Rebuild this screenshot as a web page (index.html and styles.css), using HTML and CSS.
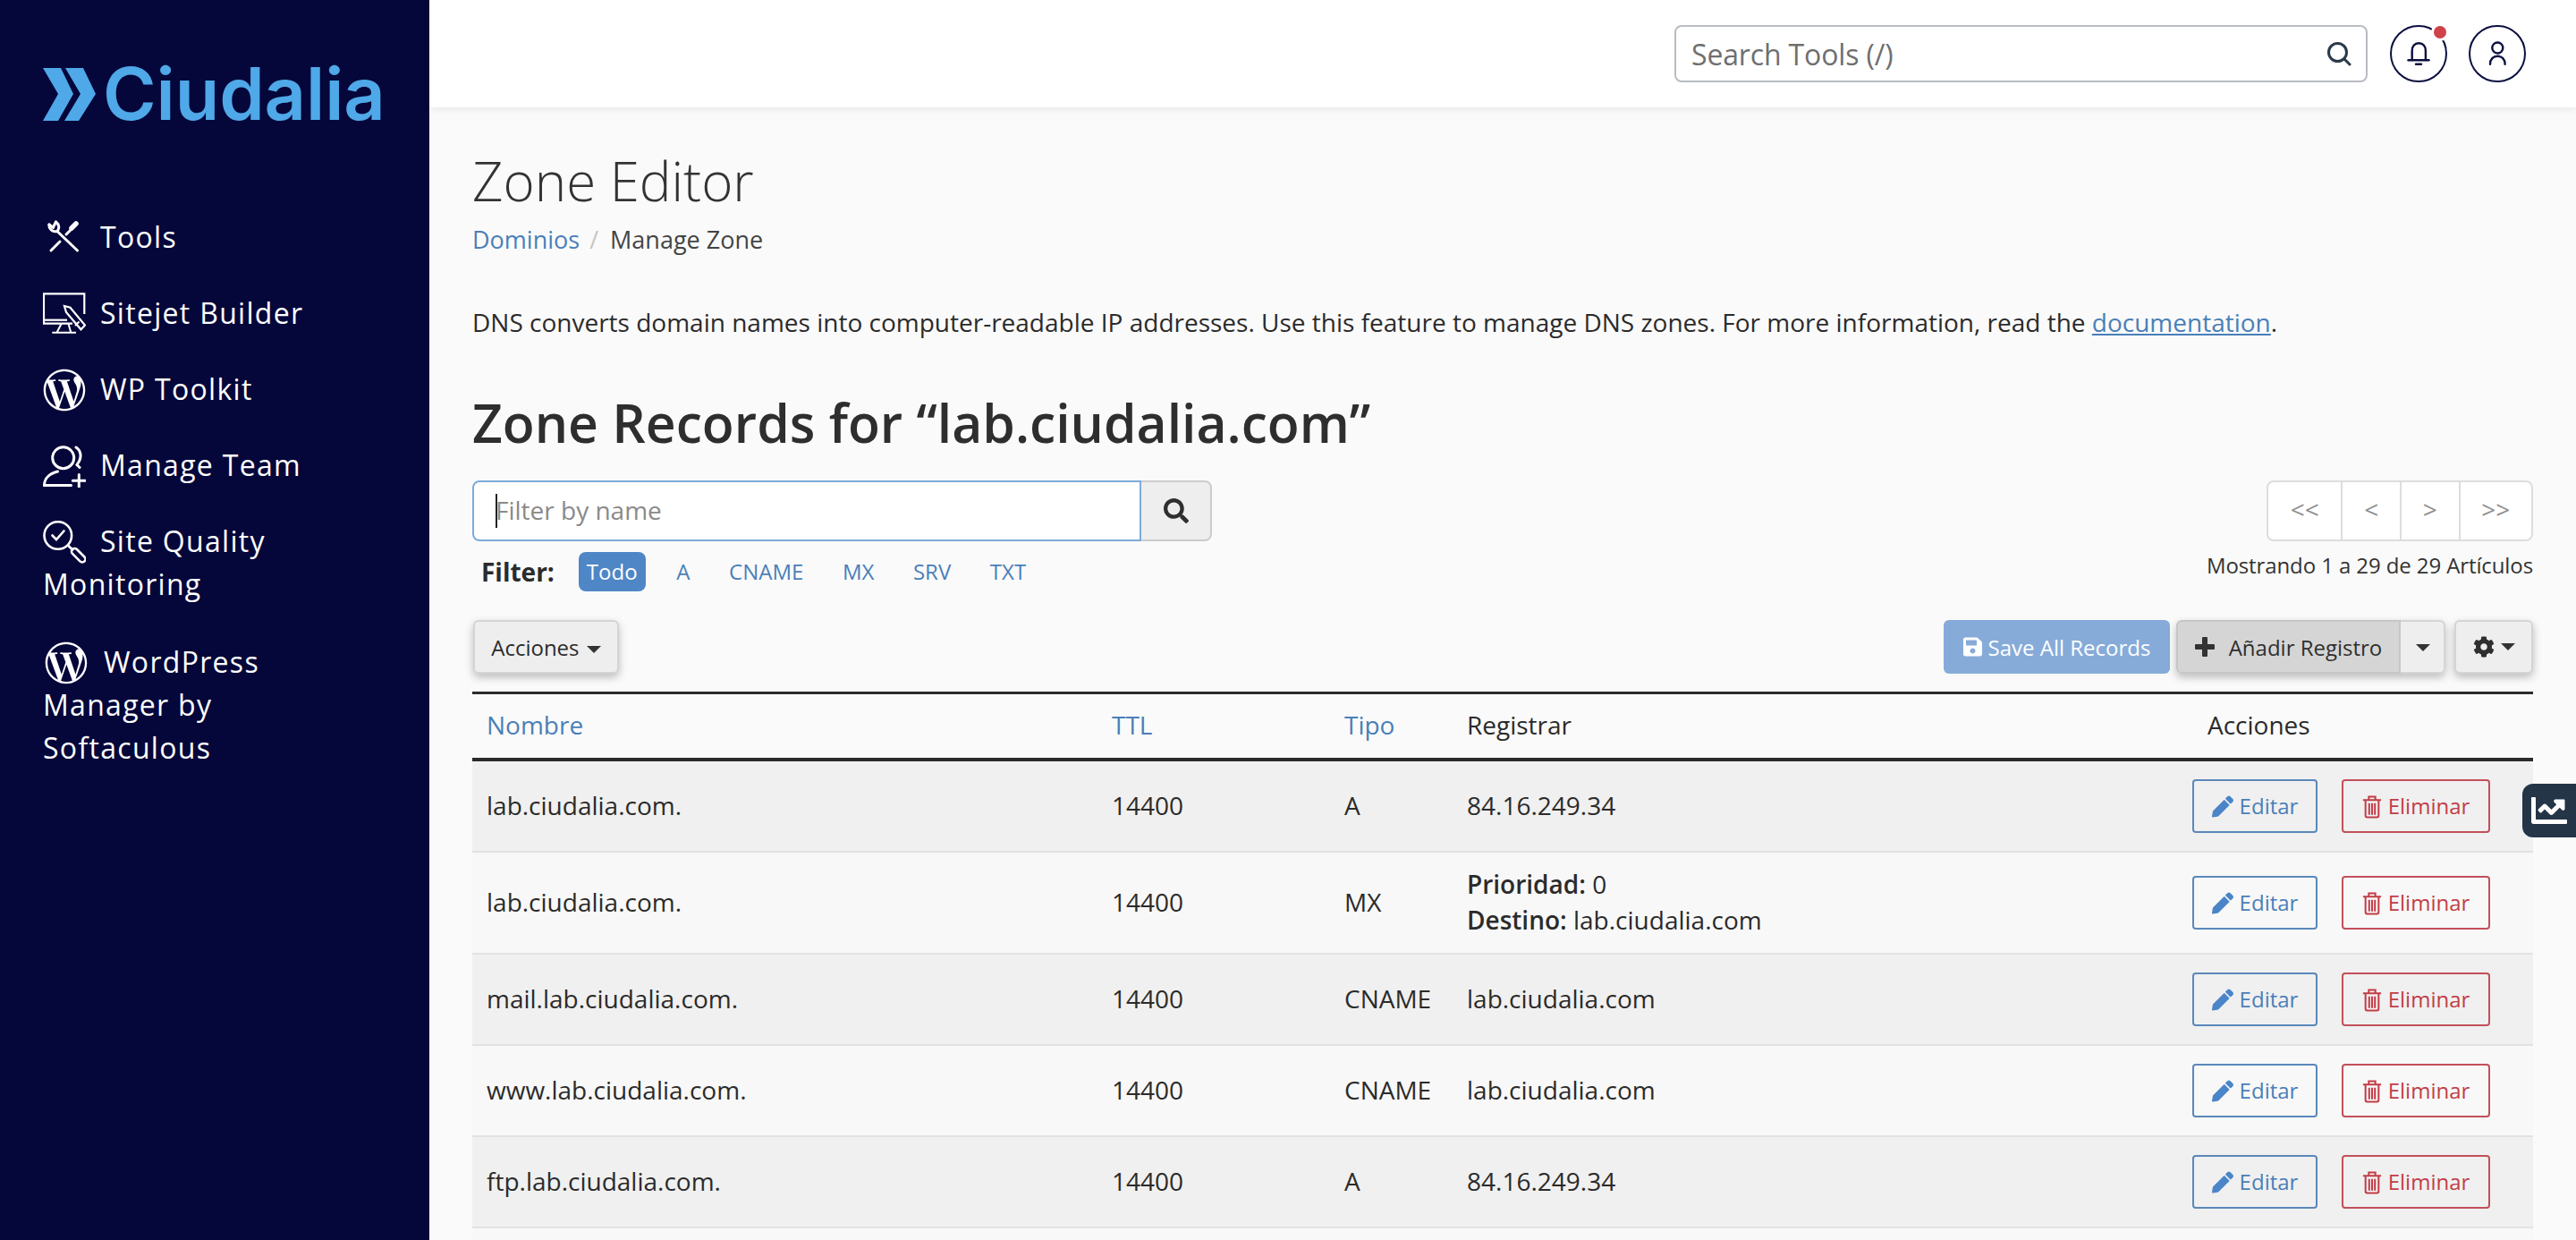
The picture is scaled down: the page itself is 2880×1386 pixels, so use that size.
FILE: index.html
```html
<!DOCTYPE html>
<html lang="es">
<head>
<meta charset="utf-8">
<title>Zone Editor</title>
<link rel="stylesheet" href="styles.css">
</head>
<body>
<aside class="sidebar">
  <div class="logo">
    <svg class="logo-mark" viewBox="0 0 59 59"><polygon points="0,0 20,0 34,29 17,59 0,59 17,29"/><polygon points="25,0 45,0 59,29 40,59 24,59 42,29"/></svg>
    <span class="logo-text">Ciudalia</span>
  </div>
  <nav class="nav">
    <a class="nav-item" href="#"><svg class="nav-icon" viewBox="0 0 48 48" fill="none" stroke="#fff" stroke-width="3" stroke-linecap="round"><path d="M7 9c-.5 5 4 9 9 7.500M16 16.500c2.500-3 2.500-7.500-1.500-10.500"/><path d="M7 9l4.500 3.500M14.500 6l-2.500 5"/><path d="M16 16.500 38.500 38"/><path d="M9 38 19 28"/><path d="M26 20l5-5"/><path d="M32 13l5-5" stroke-width="5.500"/></svg>Tools</a>
    <a class="nav-item" href="#"><svg class="nav-icon" viewBox="0 0 48 48" fill="none" stroke="#fff" stroke-width="2.200"><path d="M46.300 24V1.300H1V34.700H33"/><path d="M1 30.700H27"/><path d="M20.500 35l-5 9.700M28.500 35l2.800 9.700M10.300 44.700H37" stroke-width="2"/><path d="M24 15l6.500 1.800L47 36.500l-4.500 4.800L26 22z" fill="#05073a"/><path d="M40.500 32.500l-4.500 4.500"/></svg>Sitejet Builder</a>
    <a class="nav-item" href="#"><svg class="nav-icon" viewBox="0 0 512 512" fill="#fff"><path d="M256 8C119.3 8 8 119.2 8 256c0 136.700 111.300 248 248 248s248-111.300 248-248C504 119.200 392.700 8 256 8zM33 256c0-32.300 6.900-63 19.300-90.700l106.400 291.400C84.300 420.500 33 344.200 33 256zm223 223c-21.900 0-43-3.200-63-9.100l66.900-194.400 68.500 187.800c.5 1.100 1 2.100 1.600 3.100-23.100 8.100-48 12.600-74 12.600zm30.700-327.500c13.400-.7 25.500-2.100 25.500-2.100 12-1.400 10.600-19.100-1.400-18.400 0 0-36.100 2.800-59.400 2.800-21.900 0-58.700-2.800-58.700-2.800-12-.7-13.400 17.700-1.400 18.400 0 0 11.400 1.400 23.400 2.100l34.700 95.200L200.600 393l-81.200-241.500c13.400-.7 25.500-2.100 25.500-2.100 12-1.400 10.600-19.100-1.400-18.400 0 0-36.100 2.800-59.400 2.800-4.200 0-9.100-.1-14.400-.3C109.600 73 178.100 33 256 33c58 0 110.900 22.200 150.600 58.500-1-.1-1.900-.2-2.900-.2-21.900 0-37.400 19.100-37.400 39.600 0 18.400 10.600 33.900 21.900 52.300 8.500 14.800 18.400 33.900 18.400 61.500 0 19.100-7.300 41.200-17 72.100l-22.200 74.300-80.700-240.100zm81.400 297.200l68.100-196.900c12.700-31.800 17-57.200 17-79.900 0-8.200-.5-15.800-1.500-22.900 17.400 31.800 27.300 68.200 27.300 107 0 82.300-44.600 154.100-110.900 192.700z"/></svg>WP Toolkit</a>
    <a class="nav-item" href="#"><svg class="nav-icon" viewBox="0 0 48 48" fill="none" stroke="#fff" stroke-width="3" stroke-linecap="round"><circle cx="22.700" cy="14.700" r="12"/><path d="M37 3c5 3 6.500 10 3.500 15.500l-2.500 4 3 3"/><path d="M1.500 45.500c0-8.500 7-13.500 15-15.500"/><path d="M1.500 45.500h30"/><path d="M40.300 33.500v14M33.300 40.300h14"/></svg>Manage Team</a>
    <a class="nav-item" href="#"><svg class="nav-icon" viewBox="0 0 48 48" fill="none" stroke="#fff" stroke-width="2.600" stroke-linecap="round"><circle cx="16.800" cy="16.500" r="15.300"/><path d="M10.500 16.500l4.500 4.500 8.500-9.500"/><path d="M28 27.500l5 5"/><rect x="-3.500" y="0" width="7" height="19" rx="3.500" transform="translate(33 32) rotate(-45)"/></svg>Site Quality Monitoring</a>
    <a class="nav-item nav-item-shift" href="#"><svg class="nav-icon" viewBox="0 0 512 512" fill="#fff"><path d="M256 8C119.3 8 8 119.2 8 256c0 136.700 111.300 248 248 248s248-111.300 248-248C504 119.200 392.700 8 256 8zM33 256c0-32.300 6.900-63 19.300-90.700l106.400 291.400C84.300 420.500 33 344.200 33 256zm223 223c-21.900 0-43-3.200-63-9.100l66.900-194.400 68.500 187.800c.5 1.100 1 2.100 1.600 3.100-23.100 8.100-48 12.600-74 12.600zm30.700-327.500c13.400-.7 25.500-2.100 25.500-2.100 12-1.400 10.600-19.100-1.400-18.400 0 0-36.100 2.800-59.400 2.800-21.900 0-58.700-2.800-58.700-2.800-12-.7-13.400 17.700-1.400 18.400 0 0 11.400 1.400 23.400 2.100l34.700 95.200L200.600 393l-81.200-241.500c13.400-.7 25.500-2.100 25.500-2.100 12-1.400 10.600-19.100-1.400-18.400 0 0-36.100 2.800-59.400 2.800-4.200 0-9.100-.1-14.400-.3C109.600 73 178.100 33 256 33c58 0 110.900 22.200 150.600 58.500-1-.1-1.900-.2-2.900-.2-21.900 0-37.400 19.100-37.400 39.600 0 18.400 10.600 33.900 21.900 52.300 8.500 14.800 18.400 33.900 18.400 61.500 0 19.100-7.300 41.200-17 72.100l-22.200 74.300-80.700-240.100zm81.400 297.200l68.100-196.900c12.700-31.800 17-57.200 17-79.900 0-8.200-.5-15.800-1.500-22.900 17.400 31.800 27.300 68.200 27.300 107 0 82.300-44.600 154.100-110.900 192.700z"/></svg><span class="nav-gap"></span>WordPress Manager by Softaculous</a>
  </nav>
</aside>

<div class="main">
  <header class="topbar">
    <label class="tool-search">
      <input class="tool-input" type="text" placeholder="Search Tools (/)">
      <svg class="tool-icon" viewBox="0 0 28 28" fill="none" stroke="#2b3a4a" stroke-width="3" stroke-linecap="round"><circle cx="12.500" cy="12.500" r="10"/><path d="M20 20l6 6"/></svg>
    </label>
    <button class="round-btn">
      <svg class="round-icon" viewBox="0 0 28 28" fill="none" stroke="#0b0f40" stroke-width="2.400" stroke-linecap="round"><path d="M6.700 21V11c0-5.500 3-8.700 7.600-8.700s7.600 3.200 7.600 8.700v10"/><path d="M2.500 21.300h23"/><path d="M11 25.700h6"/></svg>
      <span class="dot"></span>
    </button>
    <button class="round-btn">
      <svg class="round-icon" viewBox="0 0 28 28" fill="none" stroke="#0b0f40" stroke-width="2.400" stroke-linecap="round"><circle cx="14.300" cy="7.500" r="6"/><path d="M6 25.700c0-5.500 3.500-9 8.300-9s8.300 3.500 8.300 9"/></svg>
    </button>
  </header>

  <main class="content">
    <h1 class="page-title">Zone Editor</h1>
    <div class="crumbs"><a href="#">Dominios</a><span class="crumb-sep">/</span><span>Manage Zone</span></div>
    <p class="intro">DNS converts domain names into computer-readable IP addresses. Use this feature to manage DNS zones. For more information, read the <a href="#">documentation</a>.</p>
    <h2 class="zone-title">Zone Records for “lab.ciudalia.com”</h2>

    <div class="controls">
      <div class="controls-left">
        <div class="filter-group">
          <div class="filter-wrap"><input class="filter-input" type="text" placeholder="Filter by name"><span class="caret-line"></span></div>
          <button class="filter-btn"><svg class="fa-search" viewBox="0 0 512 512"><path d="M505 442.700L405.300 343c-4.500-4.500-10.600-7-17-7H372c27.600-35.300 44-79.700 44-128C416 93.100 322.900 0 208 0S0 93.100 0 208s93.100 208 208 208c48.300 0 92.700-16.400 128-44v16.300c0 6.400 2.500 12.500 7 17l99.700 99.700c9.400 9.400 24.600 9.400 33.900 0l28.300-28.300c9.400-9.400 9.400-24.600.1-34zM208 336c-70.700 0-128-57.200-128-128 0-70.700 57.200-128 128-128 70.700 0 128 57.200 128 128 0 70.700-57.200 128-128 128z"/></svg></button>
        </div>
        <div class="type-filter">
          <strong class="type-label">Filter:</strong>
          <a class="pill pill-active" href="#">Todo</a>
          <a class="pill" href="#">A</a>
          <a class="pill" href="#">CNAME</a>
          <a class="pill" href="#">MX</a>
          <a class="pill" href="#">SRV</a>
          <a class="pill" href="#">TXT</a>
        </div>
      </div>
      <div class="controls-right">
        <div class="pager"><a class="pg pg-wide" href="#">&lt;&lt;</a><a class="pg" href="#">&lt;</a><a class="pg" href="#">&gt;</a><a class="pg pg-wide" href="#">&gt;&gt;</a></div>
        <div class="count">Mostrando 1 a 29 de 29 Artículos</div>
      </div>
    </div>

    <div class="actions-bar">
      <button class="btn btn-shadow btn-acciones">Acciones <span class="caret"></span></button>
      <div class="actions-right">
        <button class="btn-save"><svg class="fa-save" viewBox="0 0 448 512"><path d="M433.941 129.941l-83.882-83.882A48 48 0 0 0 316.118 32H48C21.490 32 0 53.490 0 80v352c0 26.510 21.490 48 48 48h352c26.510 0 48-21.490 48-48V163.882a48 48 0 0 0-14.059-33.941zM224 416c-35.346 0-64-28.654-64-64 0-35.346 28.654-64 64-64s64 28.654 64 64c0 35.346-28.654 64-64 64zm96-304.520V212c0 6.627-5.373 12-12 12H76c-6.627 0-12-5.373-12-12V108c0-6.627 5.373-12 12-12h228.520c3.183 0 6.235 1.264 8.485 3.515l3.480 3.480A11.996 11.996 0 0 1 320 111.480z"/></svg>Save All Records</button>
        <div class="split btn-shadow">
          <button class="split-main"><span class="plus"></span>Añadir Registro</button>
          <button class="split-caret"><span class="caret"></span></button>
        </div>
        <button class="btn btn-shadow btn-gear"><svg class="fa-cog" viewBox="0 0 512 512"><path d="M487.400 315.700l-42.600-24.600c4.300-23.200 4.300-47 0-70.200l42.600-24.600c4.900-2.800 7.100-8.600 5.500-14-11.100-35.600-30-67.800-54.700-94.600-3.800-4.100-10-5.100-14.800-2.300L380.800 110c-17.900-15.400-38.500-27.300-60.800-35.100V25.800c0-5.600-3.900-10.500-9.400-11.700-36.700-8.200-74.300-7.800-109.200 0-5.500 1.200-9.400 6.100-9.400 11.700V75c-22.200 7.900-42.800 19.800-60.800 35.100L88.700 85.500c-4.900-2.800-11-1.900-14.800 2.300-24.700 26.700-43.600 58.900-54.700 94.600-1.700 5.400.6 11.200 5.500 14L67.300 221c-4.300 23.200-4.300 47 0 70.200l-42.600 24.600c-4.900 2.800-7.100 8.600-5.500 14 11.100 35.600 30 67.800 54.700 94.600 3.800 4.100 10 5.100 14.800 2.300l42.600-24.600c17.900 15.400 38.500 27.300 60.800 35.100v49.200c0 5.600 3.900 10.500 9.400 11.700 36.700 8.200 74.300 7.800 109.200 0 5.500-1.200 9.400-6.100 9.400-11.700v-49.200c22.200-7.900 42.800-19.800 60.800-35.100l42.600 24.600c4.900 2.800 11 1.900 14.800-2.300 24.700-26.700 43.600-58.900 54.700-94.600 1.500-5.500-.7-11.300-5.600-14.100zM256 336c-44.100 0-80-35.900-80-80s35.900-80 80-80 80 35.900 80 80-35.900 80-80 80z"/></svg><span class="caret"></span></button>
      </div>
    </div>

    <table class="records">
      <colgroup><col class="c-name"><col class="c-ttl"><col class="c-type"><col class="c-rec"><col class="c-act"></colgroup>
      <thead>
        <tr><th><a href="#">Nombre</a></th><th><a href="#">TTL</a></th><th><a href="#">Tipo</a></th><th>Registrar</th><th class="th-actions">Acciones</th></tr>
      </thead>
      <tbody>
        <tr><td>lab.ciudalia.com.</td><td>14400</td><td>A</td><td>84.16.249.34</td><td class="row-actions"><a class="btn-edit" href="#"><svg class="fa-pen" viewBox="0 0 512 512"><path d="M497.900 142.100l-46.100 46.100c-4.700 4.700-12.300 4.700-17 0l-111-111c-4.700-4.700-4.700-12.300 0-17l46.100-46.100c18.700-18.700 49.100-18.700 67.900 0l60.100 60.100c18.800 18.700 18.800 49.100 0 67.900zM284.200 99.800L21.600 362.400.4 483.900c-2.900 16.400 11.400 30.600 27.800 27.800l121.500-21.300 262.600-262.600c4.700-4.700 4.700-12.300 0-17l-111-111c-4.800-4.700-12.400-4.700-17.100 0z"/></svg>Editar</a><a class="btn-del" href="#"><svg class="fa-trash" viewBox="0 0 24 28" fill="none" stroke="currentColor" stroke-width="2.200"><path d="M1 6h22M8 6V2h8v4M4 6v19c0 1 .7 2 2 2h12c1.300 0 2-1 2-2V6M8.500 10v14M12 10v14M15.500 10v14"/></svg>Eliminar</a></td></tr>
        <tr class="tall"><td>lab.ciudalia.com.</td><td>14400</td><td>MX</td><td><strong>Prioridad:</strong> 0<br><strong>Destino:</strong> lab.ciudalia.com</td><td class="row-actions"><a class="btn-edit" href="#"><svg class="fa-pen" viewBox="0 0 512 512"><path d="M497.900 142.100l-46.100 46.100c-4.700 4.700-12.300 4.700-17 0l-111-111c-4.700-4.700-4.700-12.300 0-17l46.100-46.100c18.700-18.700 49.100-18.700 67.900 0l60.100 60.100c18.800 18.700 18.800 49.100 0 67.900zM284.200 99.800L21.600 362.400.4 483.900c-2.900 16.400 11.400 30.600 27.800 27.800l121.500-21.300 262.600-262.600c4.700-4.700 4.700-12.300 0-17l-111-111c-4.800-4.700-12.400-4.700-17.100 0z"/></svg>Editar</a><a class="btn-del" href="#"><svg class="fa-trash" viewBox="0 0 24 28" fill="none" stroke="currentColor" stroke-width="2.200"><path d="M1 6h22M8 6V2h8v4M4 6v19c0 1 .7 2 2 2h12c1.300 0 2-1 2-2V6M8.500 10v14M12 10v14M15.500 10v14"/></svg>Eliminar</a></td></tr>
        <tr><td>mail.lab.ciudalia.com.</td><td>14400</td><td>CNAME</td><td>lab.ciudalia.com</td><td class="row-actions"><a class="btn-edit" href="#"><svg class="fa-pen" viewBox="0 0 512 512"><path d="M497.900 142.100l-46.100 46.100c-4.700 4.700-12.300 4.700-17 0l-111-111c-4.700-4.700-4.700-12.300 0-17l46.100-46.100c18.700-18.700 49.100-18.700 67.900 0l60.100 60.100c18.800 18.700 18.800 49.100 0 67.900zM284.200 99.800L21.600 362.400.4 483.900c-2.900 16.400 11.400 30.600 27.800 27.800l121.500-21.300 262.600-262.600c4.700-4.700 4.700-12.300 0-17l-111-111c-4.800-4.700-12.400-4.700-17.100 0z"/></svg>Editar</a><a class="btn-del" href="#"><svg class="fa-trash" viewBox="0 0 24 28" fill="none" stroke="currentColor" stroke-width="2.200"><path d="M1 6h22M8 6V2h8v4M4 6v19c0 1 .7 2 2 2h12c1.300 0 2-1 2-2V6M8.500 10v14M12 10v14M15.500 10v14"/></svg>Eliminar</a></td></tr>
        <tr><td>www.lab.ciudalia.com.</td><td>14400</td><td>CNAME</td><td>lab.ciudalia.com</td><td class="row-actions"><a class="btn-edit" href="#"><svg class="fa-pen" viewBox="0 0 512 512"><path d="M497.900 142.100l-46.100 46.100c-4.700 4.700-12.300 4.700-17 0l-111-111c-4.700-4.700-4.700-12.300 0-17l46.100-46.100c18.700-18.700 49.100-18.700 67.900 0l60.100 60.100c18.800 18.700 18.800 49.100 0 67.900zM284.200 99.800L21.600 362.400.4 483.900c-2.900 16.400 11.400 30.600 27.800 27.800l121.500-21.300 262.600-262.600c4.700-4.700 4.700-12.300 0-17l-111-111c-4.800-4.700-12.400-4.700-17.100 0z"/></svg>Editar</a><a class="btn-del" href="#"><svg class="fa-trash" viewBox="0 0 24 28" fill="none" stroke="currentColor" stroke-width="2.200"><path d="M1 6h22M8 6V2h8v4M4 6v19c0 1 .7 2 2 2h12c1.300 0 2-1 2-2V6M8.500 10v14M12 10v14M15.500 10v14"/></svg>Eliminar</a></td></tr>
        <tr><td>ftp.lab.ciudalia.com.</td><td>14400</td><td>A</td><td>84.16.249.34</td><td class="row-actions"><a class="btn-edit" href="#"><svg class="fa-pen" viewBox="0 0 512 512"><path d="M497.900 142.100l-46.100 46.100c-4.700 4.700-12.300 4.700-17 0l-111-111c-4.700-4.700-4.700-12.300 0-17l46.100-46.100c18.700-18.700 49.100-18.700 67.900 0l60.100 60.100c18.800 18.700 18.800 49.100 0 67.900zM284.200 99.800L21.600 362.400.4 483.900c-2.900 16.400 11.400 30.600 27.800 27.800l121.500-21.300 262.600-262.600c4.700-4.700 4.700-12.300 0-17l-111-111c-4.800-4.700-12.400-4.700-17.100 0z"/></svg>Editar</a><a class="btn-del" href="#"><svg class="fa-trash" viewBox="0 0 24 28" fill="none" stroke="currentColor" stroke-width="2.200"><path d="M1 6h22M8 6V2h8v4M4 6v19c0 1 .7 2 2 2h12c1.300 0 2-1 2-2V6M8.500 10v14M12 10v14M15.500 10v14"/></svg>Eliminar</a></td></tr>
        <tr><td></td><td></td><td></td><td></td><td></td></tr>
      </tbody>
    </table>
  </main>
</div>

<a class="stats-tab" href="#"><svg class="fa-chart" viewBox="0 0 512 512"><path d="M496 384H64V80c0-8.840-7.160-16-16-16H16C7.160 64 0 71.160 0 80v336c0 17.670 14.330 32 32 32h464c8.840 0 16-7.160 16-16v-32c0-8.840-7.160-16-16-16zM464 96H345.940c-21.380 0-32.090 25.850-16.970 40.970l32.400 32.400L288 242.750l-73.370-73.370c-12.500-12.500-32.760-12.500-45.250 0l-68.690 68.690c-6.250 6.250-6.250 16.380 0 22.630l22.620 22.620c6.250 6.250 16.380 6.250 22.630 0L192 237.250l73.370 73.370c12.500 12.500 32.760 12.500 45.250 0l96-96 32.400 32.400c15.120 15.120 40.970 4.410 40.970-16.970V112c0-8.840-7.160-16-16-16z"/></svg></a>
</body>
</html>
```
FILE: styles.css
```css
* { box-sizing: border-box; }
html, body { height: 100%; margin: 0; overflow: hidden; }
body {
  display: flex;
  font-family: "Open Sans", "Noto Sans", sans-serif;
  font-size: 28px;
  line-height: 40px;
  color: #2b2b2b;
  background: #fafafa;
}
a { color: #4a7fb8; text-decoration: none; }
button { font-family: inherit; cursor: pointer; }
input { font-family: inherit; }

/* Sidebar */
.sidebar {
  flex: 0 0 480px;
  min-width: 0;
  height: 100%;
  background: #05073a;
  padding: 75px 56px 0 48px;
}
.logo { display: flex; align-items: center; gap: 8px; height: 60px; }
.logo-mark { width: 59px; height: 59px; fill: #4fa8e8; flex: none; }
.logo-text { font-family: Inter, sans-serif; font-weight: 600; font-size: 81px; line-height: 60px; letter-spacing: -.1px; color: #4fa8e8; }
.nav { margin-top: 106px; }
.nav-item {
  display: block;
  margin-bottom: 37px;
  font-size: 32px;
  line-height: 48px;
  letter-spacing: 1.3px;
  color: #fff;
}
.nav-icon { width: 48px; height: 48px; vertical-align: -11px; margin: 0 16px -2px 0; }
.nav-item-shift { margin-top: 39px; }
.nav-item-shift .nav-icon { margin-left: 2px; margin-right: 0; }
.nav-gap { display: inline-block; width: 18px; }

/* Top bar */
.main { flex: 1; min-width: 0; display: flex; flex-direction: column; }
.topbar {
  height: 120px;
  flex: none;
  display: flex;
  align-items: center;
  justify-content: flex-end;
  gap: 24px;
  padding-right: 56px;
  background: #fff;
  box-shadow: 0 2px 8px rgba(0,0,0,.08);
  position: relative;
}
.tool-search {
  width: 775px;
  height: 64px;
  display: flex;
  align-items: center;
  padding: 0 16px 0 17px;
  border: 2px solid #b9bcc2;
  border-radius: 8px;
  background: #fff;
  margin-right: 1px;
}
.tool-input { flex: 1; min-width: 0; border: 0; outline: 0; padding: 0; font-size: 32px; letter-spacing: -.15px; color: #6f6f6f; background: transparent; }
.tool-input::placeholder { color: #6f6f6f; opacity: 1; }
.tool-icon { width: 28px; height: 28px; flex: none; }
.round-btn {
  position: relative;
  width: 64px;
  height: 64px;
  padding: 0;
  display: flex;
  align-items: center;
  justify-content: center;
  background: #fff;
  border: 2px solid #0b0f40;
  border-radius: 50%;
}
.round-icon { width: 28px; height: 28px; }
.dot { position: absolute; top: -1px; right: -1px; width: 14px; height: 14px; border-radius: 50%; background: #d0424a; box-shadow: 0 0 0 3px #fff; }

/* Content */
.content { padding: 46px 48px 0; }
.page-title { margin: 0; font-size: 60px; line-height: 72px; font-weight: 300; color: #333; }
.crumbs { margin-top: 10px; display: flex; font-size: 27px; color: #444; }
.crumb-sep { margin: 0 13px 0 11px; color: #c4c4c4; }
.intro { margin: 52px 0 0; }
.intro a { text-decoration: underline; }
.zone-title { margin: 56px 0 0; font-size: 58.8px; line-height: 72px; font-weight: 600; color: #2e2e2e; }

.controls { margin-top: 29px; display: flex; justify-content: space-between; align-items: flex-start; }
.filter-group { display: flex; width: 827px; height: 68px; }
.filter-wrap { flex: 1; position: relative; }
.filter-input {
  width: 100%;
  height: 100%;
  padding: 0 24px 3px;
  font-size: 28px;
  border: 2px solid #7dabd9;
  border-radius: 8px 0 0 8px;
  outline: 0;
  background: #fff;
  color: #444;
}
.filter-input::placeholder { color: #8a8a8a; opacity: 1; }
.caret-line { position: absolute; left: 26px; top: 15px; width: 2px; height: 38px; background: #222; }
.filter-btn {
  width: 79px;
  padding: 0;
  display: flex;
  align-items: center;
  justify-content: center;
  background: #eee;
  border: 2px solid #ccc;
  border-left: 0;
  border-radius: 0 8px 8px 0;
}
.fa-search { width: 28px; height: 28px; fill: #2f2f2f; }
.type-filter { display: flex; align-items: center; height: 44px; margin-top: 12px; font-size: 24px; padding-left: 10px; }
.type-label { font-size: 28px; margin-right: 27px; font-weight: 700; }
.pill { height: 44px; line-height: 44px; padding: 0 9px; border-radius: 8px; margin-right: 25.6px; }
.pill-active { background: #4f86c6; color: #fff; }

.controls-right { display: flex; flex-direction: column; align-items: flex-end; }
.pager { display: flex; width: 298px; height: 68px; background: #fff; border: 2px solid #ddd; border-radius: 8px; }
.pg { flex: 1 1 66px; line-height: 60px; text-align: center; color: #8e8e8e; font-size: 28px; border-left: 2px solid #ddd; }
.pg:first-child { border-left: 0; }
.pg-wide { flex-basis: 82px; }
.count { margin-top: 7px; font-size: 24px; line-height: 40px; letter-spacing: -.1px; color: #333; }

.actions-bar { margin-top: 32px; display: flex; justify-content: space-between; align-items: flex-start; }
.actions-right { display: flex; align-items: flex-start; }
.btn {
  height: 60px;
  background: #eee;
  border: 2px solid #d4d4d4;
  border-radius: 6px;
  font-size: 24px;
  color: #2b2b2b;
  padding: 0;
}
.btn-shadow { box-shadow: 0 4px 10px rgba(0,0,0,.25); }
.btn-acciones { width: 163px; margin-left: 1px; }
.caret {
  display: inline-block;
  width: 0;
  height: 0;
  margin-left: 2px;
  vertical-align: middle;
  border-top: 8px solid #333;
  border-left: 8px solid transparent;
  border-right: 8px solid transparent;
}
.btn-save {
  height: 60px;
  width: 253px;
  display: flex;
  align-items: center;
  justify-content: center;
  background: #86abd9;
  color: #fff;
  border: 0;
  border-radius: 6px;
  font-size: 24px;
}
.fa-save { width: 21px; height: 24px; fill: #fff; margin-right: 7px; }
.split { display: flex; height: 60px; margin-left: 7px; border-radius: 6px; }
.split-main {
  width: 251px;
  height: 60px;
  display: flex;
  align-items: center;
  justify-content: center;
  background: #d5d5d5;
  border: 2px solid #c6c6c6;
  border-radius: 6px 0 0 6px;
  font-size: 24px;
  color: #2f2f2f;
  padding: 0;
}
.plus { position: relative; width: 22px; height: 22px; margin-right: 16px; }
.plus::before { content: ""; position: absolute; left: 8px; top: 0; width: 6px; height: 22px; background: #333; border-radius: 1px; }
.plus::after { content: ""; position: absolute; left: 0; top: 8px; width: 22px; height: 6px; background: #333; border-radius: 1px; }
.split-caret { width: 50px; height: 60px; background: #eee; border: 2px solid #d4d4d4; border-left: 0; border-radius: 0 6px 6px 0; padding: 0; }
.btn-gear { width: 88px; margin-left: 10px; display: flex; align-items: center; justify-content: center; }
.fa-cog { width: 24px; height: 24px; fill: #2f2f2f; margin-right: 5px; }

/* Table */
.records { margin-top: 20px; width: 2304px; table-layout: fixed; border-collapse: separate; border-spacing: 0; }
.c-name { width: 699px; }
.c-ttl { width: 260px; }
.c-type { width: 137px; }
.c-rec { width: 827px; }
.c-act { width: 381px; }
.records th {
  height: 78px;
  padding: 0 16px 4px;
  text-align: left;
  font-weight: 400;
  border-top: 3px solid #2b2b2b;
  border-bottom: 4px solid #2b2b2b;
}
.records th.th-actions { padding-left: 17px; }
.records td { height: 102px; padding: 0 16px 2px; border-bottom: 2px solid #e2e2e2; }
.records td strong { font-weight: 600; }
.records tbody tr:nth-child(odd) td { background: #f0f0f0; }
.records tbody tr:nth-child(even) td { background: #f8f8f8; }
.records tr.tall td { height: 114px; }
.records td.row-actions { padding: 0 48px 0 0; text-align: right; white-space: nowrap; }
.btn-edit, .btn-del {
  display: inline-flex;
  align-items: center;
  justify-content: center;
  height: 60px;
  border: 2px solid;
  border-radius: 4px;
  font-size: 24px;
  vertical-align: middle;
}
.btn-edit { width: 140px; color: #4a7fb8; border-color: #5a88ba; }
.btn-del { width: 166px; margin-left: 27px; color: #c23d47; border-color: #c2505a; }
.fa-pen { width: 24px; height: 25px; fill: #4a85c9; margin-right: 7px; }
.fa-trash { width: 22px; height: 27px; margin-right: 7px; }

.stats-tab {
  position: absolute;
  right: 0;
  top: 876px;
  width: 60px;
  height: 60px;
  display: flex;
  align-items: center;
  padding-left: 10px;
  background: #243548;
  border-radius: 12px 0 0 12px;
}
.fa-chart { width: 40px; height: 40px; fill: #fff; }
```
